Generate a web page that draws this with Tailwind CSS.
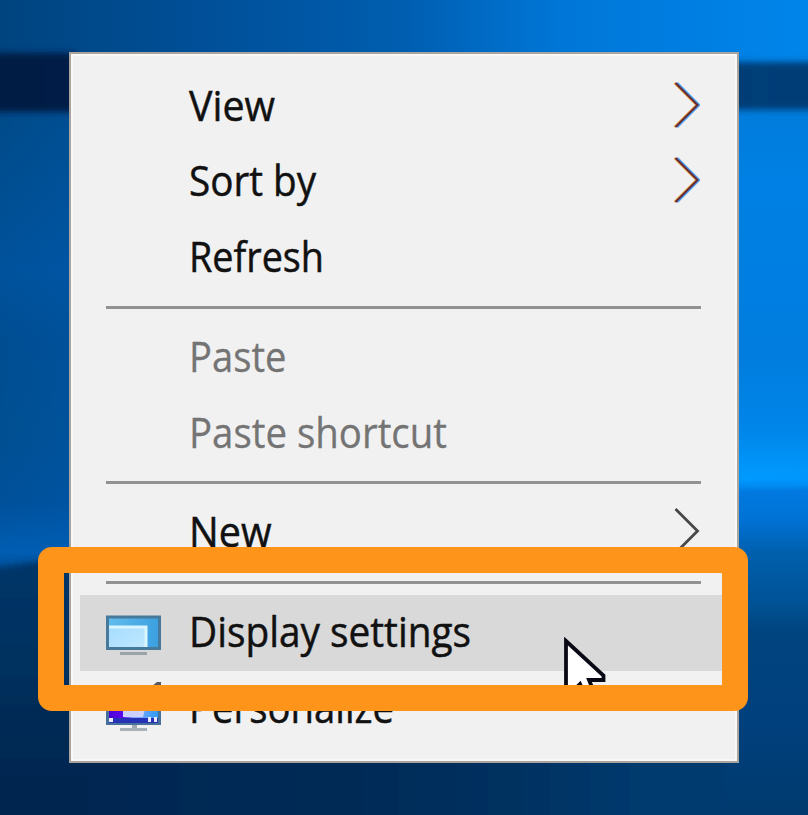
<!DOCTYPE html>
<html lang="en">
<head>
<meta charset="utf-8">
<title>Desktop context menu</title>
<script src="https://cdn.jsdelivr.net/npm/@tailwindcss/browser@4"></script>
</head>
<body class="relative h-[815px] w-[808px] overflow-hidden bg-[#004a8d] font-['Open_Sans','Noto_Sans',sans-serif] text-[42px] text-[#111]">
<!-- Desktop wallpaper -->
<svg class="absolute inset-0" width="808" height="815" viewBox="0 0 808 815" aria-hidden="true">
  <defs>
    <linearGradient id="top" x1="0" x2="1" y1="0" y2="0"><stop offset="0" stop-color="#00447f"/><stop offset=".25" stop-color="#004f98"/><stop offset=".5" stop-color="#005eb0"/><stop offset=".7" stop-color="#0077d8"/><stop offset="1" stop-color="#0085ea"/></linearGradient>
    <linearGradient id="band" x1="0" x2="1" y1="0" y2="0"><stop offset="0" stop-color="#002043"/><stop offset=".09" stop-color="#001c46"/><stop offset=".92" stop-color="#003f78"/><stop offset="1" stop-color="#003a75"/></linearGradient>
    <linearGradient id="left" x1="0" x2="0" y1="110" y2="570" gradientUnits="userSpaceOnUse"><stop offset="0" stop-color="#004a88"/><stop offset=".35" stop-color="#00529c"/><stop offset=".5" stop-color="#004d92"/><stop offset=".7" stop-color="#004f92"/><stop offset=".85" stop-color="#00509a"/><stop offset=".96" stop-color="#005db2"/><stop offset="1" stop-color="#00509a"/></linearGradient>
    <linearGradient id="edge" x1="0" x2="75" y1="0" y2="0" gradientUnits="userSpaceOnUse"><stop offset="0" stop-color="#0060b8" stop-opacity="0"/><stop offset="1" stop-color="#0060c0" stop-opacity=".2"/></linearGradient>
    <linearGradient id="right" x1="0" x2="0" y1="110" y2="815" gradientUnits="userSpaceOnUse"><stop offset="0" stop-color="#007cdb"/><stop offset=".1" stop-color="#0080e4"/><stop offset=".35" stop-color="#007ddf"/><stop offset=".45" stop-color="#0085e8"/><stop offset=".525" stop-color="#009bff"/><stop offset=".54" stop-color="#0079e0"/><stop offset=".58" stop-color="#0072d6"/><stop offset=".63" stop-color="#005fac"/><stop offset=".7" stop-color="#005295"/><stop offset=".74" stop-color="#00447f"/><stop offset=".87" stop-color="#00407d"/><stop offset="1" stop-color="#003a6e"/></linearGradient>
    <linearGradient id="low" x1="0" x2="0" y1="565" y2="815" gradientUnits="userSpaceOnUse"><stop offset="0" stop-color="#003568"/><stop offset=".4" stop-color="#003160"/><stop offset=".65" stop-color="#002a54"/><stop offset="1" stop-color="#00264e"/></linearGradient>
    <linearGradient id="floor" x1="0" x2="1" y1="0" y2="0"><stop offset="0" stop-color="#00264e"/><stop offset=".5" stop-color="#002b57"/><stop offset=".7" stop-color="#00305f"/><stop offset=".9" stop-color="#003b70"/><stop offset="1" stop-color="#003b70"/></linearGradient>
    <filter id="soft"><feGaussianBlur stdDeviation="3"/></filter>
  </defs>
  <rect width="808" height="120" fill="url(#top)"/>
  <rect y="110" width="400" height="705" fill="url(#left)"/>
  <rect y="110" width="75" height="440" fill="url(#edge)"/>
  <rect x="400" y="110" width="408" height="705" fill="url(#right)"/>
  <g filter="url(#soft)">
    <path d="M-20 53H75V62H830V110H400V112H-20Z" fill="url(#band)"/>
    <path d="M-20 570L75 556H400V840H-20Z" fill="url(#low)"/>
    <path d="M735 482L830 474V484L735 488Z" fill="#0090f5" opacity=".6"/>
    <path d="M80 745H725V840H-20V790H80Z" fill="url(#floor)"/>
  </g>
</svg>

<!-- Context menu -->
<ul class="relative ml-[69px] mt-[52px] flex h-[711px] w-[670px] flex-col border-[2.5px] border-[#aaa49f] bg-[#f1f1f1] px-[9px] pt-[14px] shadow-[inset_0_0_0_2px_#faf8f7]">
  <li class="flex h-[75.4px] shrink-0 items-center justify-between pl-[109px] pr-[28px]">
    <svg class="h-[75.4px] w-[300px] overflow-visible stroke-current stroke-[0.5px]" fill="currentColor"><text x="0" y="52.5" textLength="86" lengthAdjust="spacingAndGlyphs">View</text></svg>
    <svg class="mb-[2px] shrink-0" width="27" height="48" viewBox="0 0 27 48" fill="none"><path d="M1.5 2L23.5 24L1.5 46" stroke="#f0a23c" stroke-width="2.4"/><path d="M4 2L26 24L4 46" stroke="#4ba0f4" stroke-width="2.6"/><path d="M2.5 2L24.5 24L2.5 46" stroke="#662a35" stroke-width="2"/></svg>
  </li>
  <li class="flex h-[75.4px] shrink-0 items-center justify-between pl-[109px] pr-[28px]">
    <svg class="h-[75.4px] w-[300px] overflow-visible stroke-current stroke-[0.5px]" fill="currentColor"><text x="0" y="52.5" textLength="127" lengthAdjust="spacingAndGlyphs">Sort by</text></svg>
    <svg class="mb-[2px] shrink-0" width="27" height="48" viewBox="0 0 27 48" fill="none"><path d="M1.5 2L23.5 24L1.5 46" stroke="#f0a23c" stroke-width="2.4"/><path d="M4 2L26 24L4 46" stroke="#4ba0f4" stroke-width="2.6"/><path d="M2.5 2L24.5 24L2.5 46" stroke="#662a35" stroke-width="2"/></svg>
  </li>
  <li class="flex h-[75.4px] shrink-0 items-center pl-[109px]">
    <svg class="h-[75.4px] w-[300px] overflow-visible stroke-current stroke-[0.5px]" fill="currentColor"><text x="0" y="53" textLength="135" lengthAdjust="spacingAndGlyphs">Refresh</text></svg>
  </li>
  <li class="flex h-[25px] shrink-0 items-center pl-[26px] pr-[27px] pt-px"><div class="h-[3px] w-full bg-[#929292]"></div></li>
  <li class="flex h-[75.4px] shrink-0 items-center pl-[109px] text-[#747474]">
    <svg class="h-[75.4px] w-[300px] overflow-visible stroke-current stroke-[0.3px]" fill="currentColor"><text x="0" y="52.5" textLength="97.5" lengthAdjust="spacingAndGlyphs">Paste</text></svg>
  </li>
  <li class="flex h-[75.4px] shrink-0 items-center pl-[109px] text-[#747474]">
    <svg class="h-[75.4px] w-[300px] overflow-visible stroke-current stroke-[0.3px]" fill="currentColor"><text x="0" y="52.5" textLength="258" lengthAdjust="spacingAndGlyphs">Paste shortcut</text></svg>
  </li>
  <li class="flex h-[25px] shrink-0 items-center pl-[26px] pr-[27px] pt-px"><div class="h-[3px] w-full bg-[#929292]"></div></li>
  <li class="flex h-[75.4px] shrink-0 items-center justify-between pl-[109px] pr-[28px]">
    <svg class="h-[75.4px] w-[300px] overflow-visible stroke-current stroke-[0.5px]" fill="currentColor"><text x="0" y="52" textLength="82.5" lengthAdjust="spacingAndGlyphs">New</text></svg>
    <svg class="mb-[4px] shrink-0" width="27" height="48" viewBox="0 0 27 48" fill="none"><path d="M2.5 2L24.5 24L2.5 46" stroke="#484848" stroke-width="2.8"/></svg>
  </li>
  <li class="flex h-[25px] shrink-0 items-center pl-[26px] pr-[27px]"><div class="h-[3px] w-full bg-[#929292]"></div></li>
  <li class="flex h-[75.4px] shrink-0 items-center bg-[#d9d9d9] pl-[26px]">
    <svg class="mr-[28px] shrink-0" width="55" height="44" viewBox="0 0 55 44">
      <defs><linearGradient id="screen"><stop offset="0" stop-color="#62bdec"/><stop offset="1" stop-color="#3b9fe0"/></linearGradient><linearGradient id="pane" x2="1" y2="1"><stop offset="0" stop-color="#a5dcff"/><stop offset="1" stop-color="#c0e8ff"/></linearGradient></defs>
      <rect x="1.5" y="6" width="52" height="31.5" fill="url(#screen)" stroke="#47799b" stroke-width="3"/>
      <path d="M3 15H41V36H3Z" fill="url(#pane)"/><path d="M3 16H40V36" fill="none" stroke="#d9f6ff" stroke-width="3"/>
      <rect x="14" y="41" width="27" height="3" fill="#9ca3a8"/>
    </svg>
    <svg class="h-[75.4px] w-[300px] overflow-visible stroke-current stroke-[0.5px]" fill="currentColor"><text x="0" y="52" textLength="282" lengthAdjust="spacingAndGlyphs">Display settings</text></svg>
  </li>
  <li class="flex h-[75.4px] shrink-0 items-center pl-[26px]">
    <svg class="mr-[28px] shrink-0 overflow-visible" width="55" height="44" viewBox="0 0 55 44">
      <defs><linearGradient id="theme"><stop offset="0" stop-color="#4b00d0"/><stop offset=".3" stop-color="#5d08ee"/><stop offset=".5" stop-color="#8aaaff"/><stop offset="1" stop-color="#299bf2"/></linearGradient></defs>
      <rect x="1.5" y="5.5" width="52" height="32" fill="url(#theme)" stroke="#45719b" stroke-width="3"/>
      <path d="M17 15H41L37 31H17Z" fill="#cbd0ff"/>
      <path d="M3 32H52V37H3Z" fill="#2632b5"/>
      <path d="M3 32h4v4H3zM42 31h3v5h-3zM48 31h3v5h-3z" fill="#e9eaff"/>
      <path d="M46 0L51-4H55V0L48 8Z" fill="#555a60"/>
      <path d="M26 39h5v3h-5z" fill="#9ba9b3"/><rect x="14" y="42" width="27" height="3" fill="#a8b1b7"/>
    </svg>
    <svg class="h-[75.4px] w-[300px] overflow-visible stroke-current stroke-[0.5px]" fill="currentColor"><text x="0" y="51.5" textLength="205" lengthAdjust="spacingAndGlyphs">Personalize</text></svg>
  </li>
</ul>

<!-- Mouse pointer -->
<svg class="absolute left-[562px] top-[637px]" width="46" height="66" viewBox="0 0 46 66" aria-hidden="true"><path d="M4 4L41.5 38.5V43H27L34 60L26 64L18 47L4 61Z" fill="#fff" stroke="#090916" stroke-width="3.8"/></svg>

<!-- Highlight frame -->
<div class="absolute left-[38px] top-[547px] h-[164px] w-[710px] rounded-[14px] border-[26.5px] border-[#ff941b]"></div>
</body>
</html>
